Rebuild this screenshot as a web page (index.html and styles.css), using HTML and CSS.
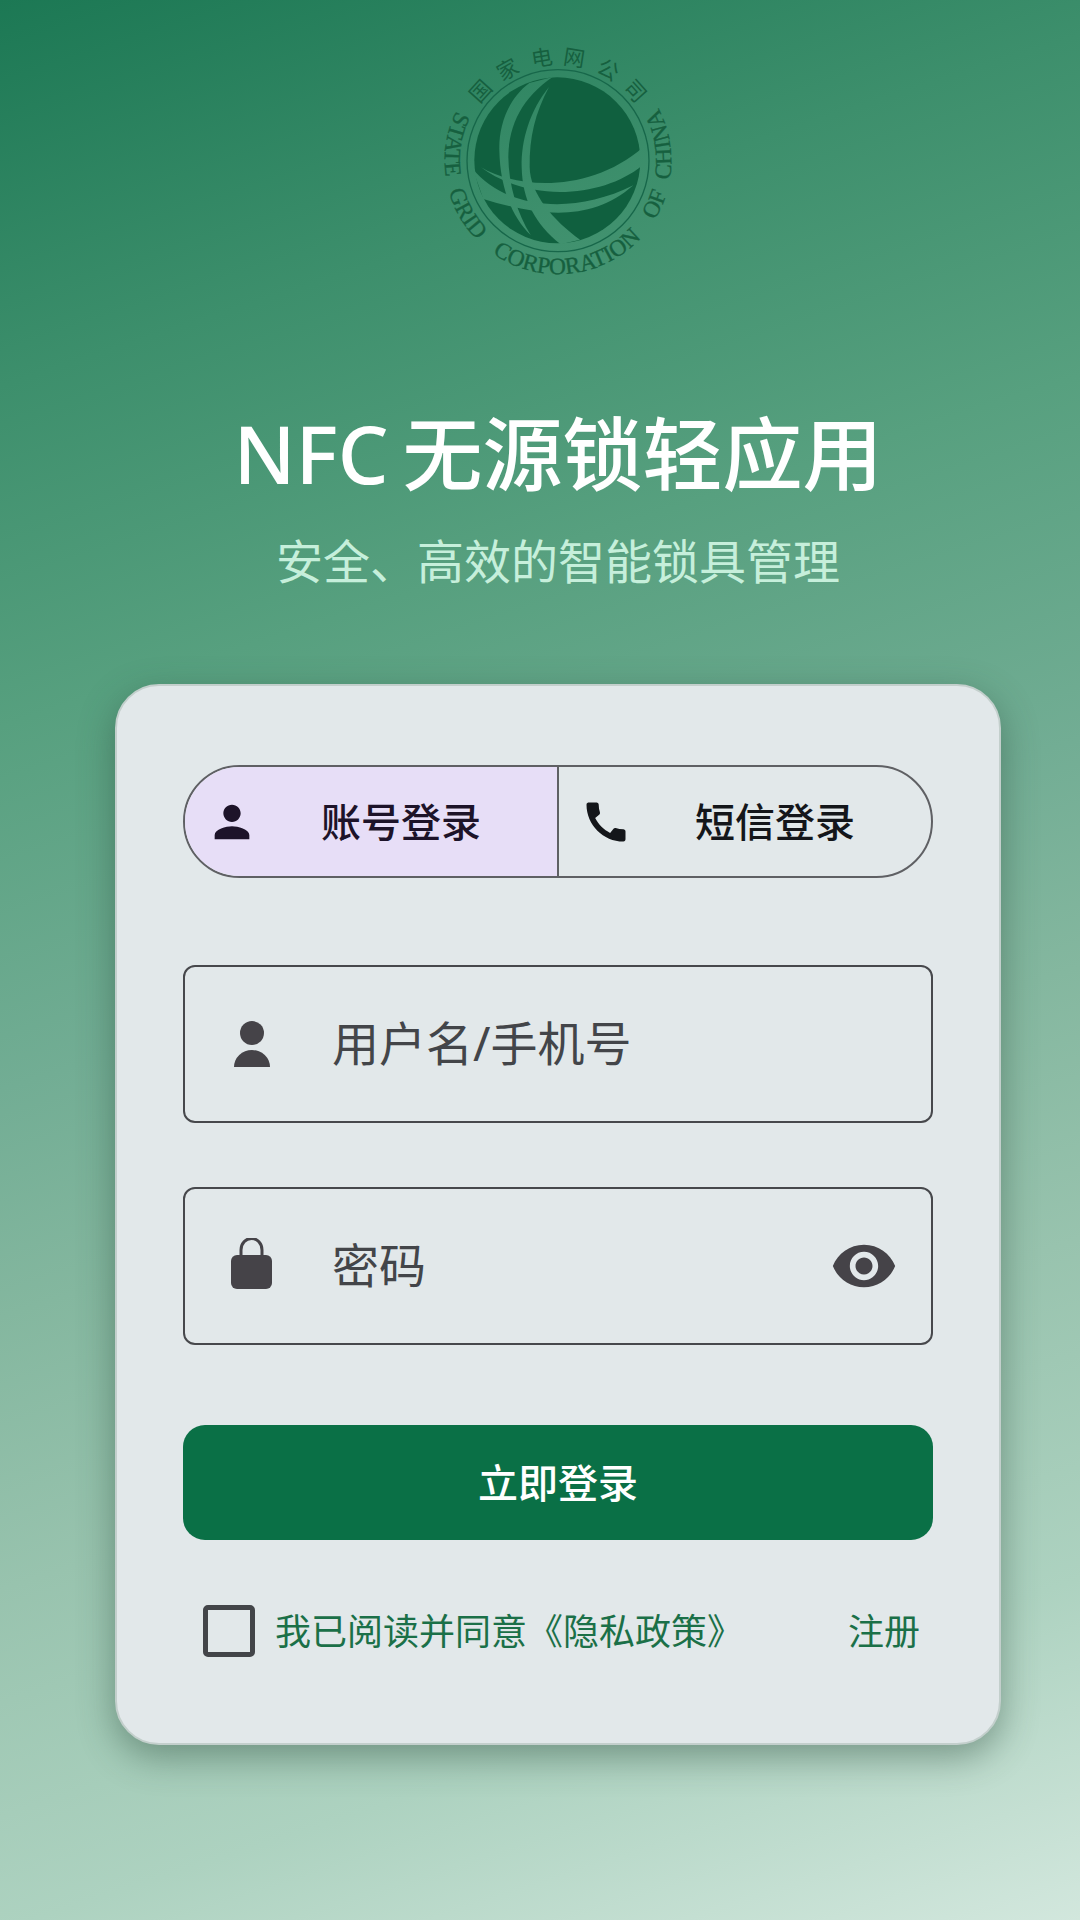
FILE: index.html
```html
<!DOCTYPE html>
<html lang="zh-CN">
<head>
  <meta charset="UTF-8">
  <meta name="viewport" content="width=device-width, initial-scale=1.0">
  <title>NFC无源锁轻应用</title>
  <link rel="stylesheet" href="styles.css">
</head>
<body>
  <main class="page">
    <header class="header">
      <svg class="logo" viewBox="9 4 750 750" role="img" aria-label="国家电网公司">
        <defs>
          <path id="ring" d="M214 87A340 340 0 1 0 554 87"/>
          <mask id="bands">
            <rect width="760" height="760" fill="#fff"/>
            <path d="M298 148C235 195 206 275 208 350C210 460 245 550 302 604C262 540 236 455 235 370C236 270 280 190 368 130Z"/>
            <path d="M357 160C300 230 273 320 275 400C277 500 315 570 392 632L450 618C370 560 300 480 299 400C298 310 315 240 357 160Z"/>
            <path d="M153 401C260 465 480 480 640 340L636 396C520 490 300 510 153 401Z"/>
            <path d="M128 405C220 520 420 550 610 455C480 570 320 545 160 496Z"/>
          </mask>
        </defs>
        <circle class="logo-circle" cx="384" cy="381" r="273"/>
        <circle class="logo-globe" cx="382" cy="380" r="249" mask="url(#bands)"/>
        <g class="logo-cn">
          <text x="384" y="92" transform="rotate(-48 384 381)">国</text>
          <text x="384" y="92" transform="rotate(-29 384 381)">家</text>
          <text x="384" y="92" transform="rotate(-9 384 381)">电</text>
          <text x="384" y="92" transform="rotate(9 384 381)">网</text>
          <text x="384" y="92" transform="rotate(29 384 381)">公</text>
          <text x="384" y="92" transform="rotate(48 384 381)">司</text>
        </g>
        <g class="logo-en">
          <text><textPath href="#ring" startOffset="17%">STATE</textPath></text>
          <text><textPath href="#ring" startOffset="30%">GRID</textPath></text>
          <text><textPath href="#ring" startOffset="52%">CORPORATION</textPath></text>
          <text><textPath href="#ring" startOffset="72%">OF</textPath></text>
          <text><textPath href="#ring" startOffset="83%">CHINA</textPath></text>
        </g>
      </svg>
      <h1 class="title"><span class="title-latin">NFC</span>无源锁轻应用</h1>
      <p class="subtitle">安全、高效的智能锁具管理</p>
    </header>

    <form class="card">
      <div class="tabs">
        <button type="button" class="tab active">
          <svg class="tab-icon" viewBox="0 0 24 24"><path d="M12 12c2.21 0 4-1.79 4-4s-1.79-4-4-4-4 1.79-4 4 1.79 4 4 4zm0 2c-2.67 0-8 1.34-8 4v2h16v-2c0-2.66-5.33-4-8-4z"/></svg>
          <span class="label">账号登录</span>
        </button>
        <button type="button" class="tab">
          <svg class="tab-icon" viewBox="0 0 24 24"><path d="M20.01 15.38c-1.23 0-2.42-.2-3.53-.56-.35-.12-.74-.03-1.01.24l-1.57 1.97c-2.83-1.35-5.48-3.9-6.89-6.83l1.95-1.66c.27-.28.35-.67.24-1.02-.37-1.11-.56-2.3-.56-3.53 0-.54-.45-.99-.99-.99H4.19C3.65 3 3 3.24 3 3.99 3 13.28 10.73 21 20.01 21c.71 0 .99-.63.99-1.18v-3.45c0-.54-.45-.99-.99-.99z"/></svg>
          <span class="label">短信登录</span>
        </button>
      </div>

      <div class="fields">
        <div class="field">
          <label for="username" aria-label="用户名/手机号">
            <svg class="field-icon" viewBox="0 0 56 56">
              <circle cx="28" cy="17" r="12"/>
              <path d="M10 51a18 17 0 0 1 36 0z"/>
            </svg>
          </label>
          <input type="text" id="username" placeholder="用户名/手机号">
        </div>
        <div class="field">
          <label for="password" aria-label="密码">
            <svg class="field-icon" viewBox="0 0 56 56">
              <rect x="7" y="17" width="41" height="34" rx="6"/>
              <path class="shackle" d="M17 19V12a10 11 0 0 1 21 0V19"/>
            </svg>
          </label>
          <input type="password" id="password" placeholder="密码">
          <button type="button" class="eye" aria-label="显示密码">
            <svg class="eye-icon" viewBox="0 0 24 24"><path d="M12 4.5C7 4.5 2.73 7.61 1 12c1.73 4.39 6 7.5 11 7.5s9.27-3.11 11-7.5c-1.73-4.39-6-7.5-11-7.5zM12 17c-2.76 0-5-2.24-5-5s2.24-5 5-5 5 2.24 5 5-2.24 5-5 5zm0-8c-1.66 0-3 1.34-3 3s1.34 3 3 3 3-1.34 3-3-1.34-3-3-3z"/></svg>
          </button>
        </div>
      </div>

      <button type="submit" class="submit"><span class="label">立即登录</span></button>

      <div class="footer">
        <input type="checkbox" id="agree" class="checkbox">
        <label class="label" for="agree">我已阅读并同意《隐私政策》</label>
        <a href="#" class="label register">注册</a>
      </div>
    </form>
  </main>
</body>
</html>
```
FILE: styles.css
```css
* {
  box-sizing: border-box;
}

body {
  margin: 0;
  min-height: 100vh;
  background: linear-gradient(162deg, #1c7854 0%, #3d8f6c 17%, #57a07f 32%, #72ad94 48%, #84b79f 58%, #98c3ae 70%, #add2c0 85%, #d2e7dd 100%);
  font-family: "Noto Sans", "Noto Sans CJK SC", sans-serif;
}

button,
input {
  margin: 0;
  padding: 0;
  border: 0;
  background: none;
  font-family: inherit;
  color: inherit;
}

button {
  cursor: pointer;
}

.page {
  padding: 35px 79px 80px 115px;
}

.header {
  display: flex;
  flex-direction: column;
  align-items: center;
}

.logo {
  width: 250px;
  height: 250px;
}

.logo-circle {
  fill: none;
  stroke: #17674a;
  stroke-width: 4;
}

.logo-globe {
  fill: #10603f;
}

.logo-cn,
.logo-en {
  fill: #16603f;
  text-anchor: middle;
}

.logo-cn {
  font-size: 64px;
}

.logo-en {
  font-family: "Liberation Serif", serif;
  font-size: 70px;
  stroke: #16603f;
  stroke-width: 1;
}

.title {
  margin: 120px 0 0;
  font-size: 80px;
  font-weight: 500;
  line-height: 96px;
  color: #fff;
}

.title-latin {
  margin-right: 14px;
}

.subtitle {
  margin: 30px 0 0;
  font-size: 47px;
  line-height: 60px;
  color: #c6efdb;
}

.card {
  margin-top: 93px;
  padding: 79px 66px 86px;
  border: 2px solid #c3cfcc;
  border-radius: 44px;
  background: #e2e8ea;
  box-shadow: 0 12px 36px rgba(40, 70, 55, 0.45);
}

/* CJK glyphs sit low in the line box */
.label {
  padding-bottom: 4px;
}

.tabs {
  display: flex;
  height: 113px;
  border: 2px solid #5f6064;
  border-radius: 57px;
  overflow: hidden;
}

.tab {
  flex: 1;
  display: flex;
  align-items: center;
  gap: 63px;
  padding-left: 21px;
  font-size: 40px;
  font-weight: 500;
  color: #14161a;
}

.tab + .tab {
  border-left: 2px solid #5f6064;
}

.tab.active {
  background: #e7def7;
  color: #1d1329;
}

.tab-icon {
  width: 52px;
  height: 52px;
  fill: currentColor;
}

.fields {
  display: flex;
  flex-direction: column;
  gap: 64px;
  margin-top: 87px;
}

.field {
  display: flex;
  align-items: center;
  height: 158px;
  padding: 0 33px 0 39px;
  border: 2px solid #47484c;
  border-radius: 12px;
  color: #434549;
}

.field label {
  display: flex;
  margin-right: 52px;
}

.field input {
  flex: 1;
  min-width: 0;
  height: 100%;
  padding-bottom: 2px;
  font-size: 47px;
  outline: none;
}

.field input::placeholder {
  color: #434549;
  opacity: 1;
}

.field-icon {
  width: 56px;
  height: 56px;
  fill: #454348;
}

.shackle {
  fill: none;
  stroke: #454348;
  stroke-width: 3;
}

.eye {
  display: flex;
}

.eye-icon {
  width: 68px;
  height: 68px;
  fill: #454348;
}

.submit {
  display: flex;
  align-items: center;
  justify-content: center;
  width: 100%;
  height: 115px;
  margin-top: 80px;
  border-radius: 22px;
  background: #0a7046;
  font-size: 40px;
  font-weight: 500;
  color: #fff;
}

.footer {
  display: flex;
  align-items: center;
  height: 52px;
  margin-top: 65px;
  padding: 0 13px 0 20px;
  font-size: 36px;
  color: #1b7048;
}

.checkbox {
  appearance: none;
  width: 52px;
  height: 52px;
  margin-right: 20px;
  border: 5px solid #434549;
  border-radius: 5px;
}

.checkbox:checked {
  background: #0a7046;
}

.register {
  margin-left: auto;
  color: inherit;
  text-decoration: none;
}
```
